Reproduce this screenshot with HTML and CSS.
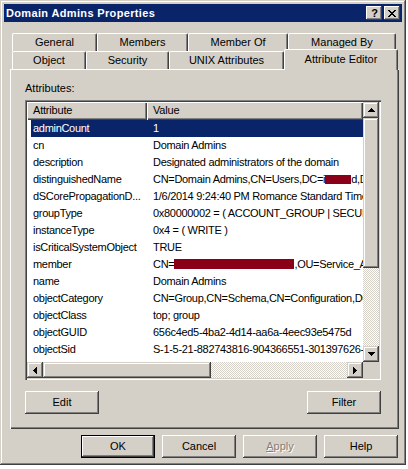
FILE: index.html
```html
<!DOCTYPE html>
<html>
<head>
<meta charset="utf-8">
<title>Domain Admins Properties</title>
<link rel="stylesheet" href="styles.css">
</head>
<body>
<div class="window">
  <div class="titlebar">
    <span class="title">Domain Admins Properties</span>
    <div class="caption-buttons">
      <div class="cap-btn help">?</div>
      <div class="cap-btn close">
        <svg width="8" height="7" viewBox="0 0 8 7"><path fill="#000" d="M0 0h2v1h-2zM6 0h2v1h-2zM1 1h2v1h-2zM5 1h2v1h-2zM2 2h4v1h-4zM3 3h2v1h-2zM2 4h4v1h-4zM1 5h2v1h-2zM5 5h2v1h-2zM0 6h2v1h-2zM6 6h2v1h-2z"/></svg>
      </div>
    </div>
  </div>
  <div class="client">
    <div class="tabs">
      <div class="tab-row">
        <div class="tab t-general">General</div>
        <div class="tab t-members">Members</div>
        <div class="tab t-memberof">Member Of</div>
        <div class="tab t-managed">Managed By</div>
      </div>
      <div class="tab-row">
        <div class="tab t-object">Object</div>
        <div class="tab t-security">Security</div>
        <div class="tab t-unix">UNIX Attributes</div>
        <div class="tab tab-selected t-attr">Attribute Editor</div>
      </div>
    </div>
    <div class="panel">
      <div class="label">Attributes:</div>
      <div class="listbox">
        <div class="list-area">
          <div class="header">
            <div class="hcell hc-attr">Attribute</div>
            <div class="hcell hc-val">Value</div>
          </div>
          <div class="rows">
            <div class="row selected"><div class="c-attr">adminCount</div><div class="c-val">1</div></div>
            <div class="row"><div class="c-attr">cn</div><div class="c-val">Domain Admins</div></div>
            <div class="row"><div class="c-attr">description</div><div class="c-val">Designated administrators of the domain</div></div>
            <div class="row"><div class="c-attr">distinguishedName</div><div class="c-val">CN=Domain Admins,CN=Users,DC=i<span class="redact r-dn"></span>d,DC=local</div></div>
            <div class="row"><div class="c-attr">dSCorePropagationD...</div><div class="c-val">1/6/2014 9:24:40 PM Romance Standard Time</div></div>
            <div class="row"><div class="c-attr">groupType</div><div class="c-val">0x80000002 = ( ACCOUNT_GROUP | SECURITY_ENABLED )</div></div>
            <div class="row"><div class="c-attr">instanceType</div><div class="c-val">0x4 = ( WRITE )</div></div>
            <div class="row"><div class="c-attr">isCriticalSystemObject</div><div class="c-val">TRUE</div></div>
            <div class="row"><div class="c-attr">member</div><div class="c-val">CN=<span class="redact r-member"></span>,OU=Service_Accounts</div></div>
            <div class="row"><div class="c-attr">name</div><div class="c-val">Domain Admins</div></div>
            <div class="row"><div class="c-attr">objectCategory</div><div class="c-val">CN=Group,CN=Schema,CN=Configuration,DC=local</div></div>
            <div class="row"><div class="c-attr">objectClass</div><div class="c-val">top; group</div></div>
            <div class="row"><div class="c-attr">objectGUID</div><div class="c-val">656c4ed5-4ba2-4d14-aa6a-4eec93e5475d</div></div>
            <div class="row"><div class="c-attr">objectSid</div><div class="c-val">S-1-5-21-882743816-904366551-301397626-512</div></div>
            <div class="row"><div class="c-attr">sAMAccountName</div><div class="c-val">Domain Admins</div></div>
          </div>
        </div>
        <div class="vscroll">
          <div class="sb-btn"><svg width="7" height="4" viewBox="0 0 7 4"><path fill="#000" d="M3 0h1v1h-1zM2 1h3v1h-3zM1 2h5v1h-5zM0 3h7v1h-7z"/></svg></div>
          <div class="sb-thumb v-thumb"></div>
          <div class="sb-track"></div>
          <div class="sb-btn"><svg width="7" height="4" viewBox="0 0 7 4"><path fill="#000" d="M0 0h7v1h-7zM1 1h5v1h-5zM2 2h3v1h-3zM3 3h1v1h-1z"/></svg></div>
        </div>
        <div class="hscroll">
          <div class="sb-btn"><svg width="4" height="7" viewBox="0 0 4 7"><path fill="#000" d="M0 3h1v1h-1zM1 2h1v3h-1zM2 1h1v5h-1zM3 0h1v7h-1z"/></svg></div>
          <div class="sb-thumb h-thumb"></div>
          <div class="sb-track"></div>
          <div class="sb-btn"><svg width="4" height="7" viewBox="0 0 4 7"><path fill="#000" d="M0 0h1v7h-1zM1 1h1v5h-1zM2 2h1v3h-1zM3 3h1v1h-1z"/></svg></div>
        </div>
        <div class="corner"></div>
      </div>
      <div class="panel-buttons">
        <div class="btn">Edit</div>
        <div class="btn">Filter</div>
      </div>
    </div>
    <div class="dialog-buttons">
      <div class="btn btn-default">OK</div>
      <div class="btn">Cancel</div>
      <div class="btn btn-disabled"><span class="mn">A</span>pply</div>
      <div class="btn">Help</div>
    </div>
  </div>
</div>
</body>
</html>
```

FILE: styles.css
```css
* { box-sizing: border-box; }
html, body { margin: 0; padding: 0; }
body {
  background: #ffffff;
  width: 408px;
  height: 469px;
  overflow: hidden;
  font-family: "Liberation Sans", Arial, sans-serif;
  font-size: 11px;
  color: #000;
}

.window {
  width: 406px;
  height: 465px;
  padding: 4px;
  background: #d4d0c8;
  box-shadow: inset -1px -1px #404040, inset 1px 1px #d4d0c8, inset -2px -2px #808080, inset 2px 2px #ffffff;
}

.titlebar {
  height: 18px;
  background: #0a246a;
  display: flex;
  align-items: center;
  justify-content: space-between;
  padding: 0 2px 0 2px;
}
.title {
  color: #fff;
  font-weight: bold;
  font-size: 11px;
  letter-spacing: 0.35px;
}
.caption-buttons { display: flex; gap: 2px; }
.cap-btn {
  width: 16px;
  height: 14px;
  background: #d4d0c8;
  box-shadow: inset -1px -1px #404040, inset 1px 1px #ffffff, inset -2px -2px #808080;
  display: flex;
  align-items: center;
  justify-content: center;
}
.help { font-weight: bold; font-size: 11px; line-height: 14px; padding-left: 1px; }

.client { padding-left: 6px; }

.tabs { padding-top: 11px; padding-left: 2px; }
.tab-row { display: flex; height: 18px; }
.tab {
  height: 18px;
  line-height: 17px;
  text-align: center;
  border-top: 1px solid #fff;
  border-left: 1px solid #fff;
  border-right: 1px solid #404040;
  border-radius: 2px 2px 0 0;
  box-shadow: inset -1px 0 #808080;
  background: #d4d0c8;
  white-space: nowrap;
}
.t-general { width: 85px; }
.t-members { width: 91px; }
.t-memberof { width: 100px; }
.t-managed { width: 108px; }
.t-object { width: 74px; }
.t-security { width: 83px; }
.t-unix { width: 115px; }
.tab-selected {
  position: relative;
  z-index: 1;
  width: 114px;
  height: 21px;
  margin-top: -2px;
  line-height: 18px;
}
.t-attr { }

.panel {
  width: 389px;
  height: 360px;
  padding: 13px 0 0 15px;
  box-shadow: inset 1px 1px #ffffff, inset -1px -1px #404040, inset -2px -2px #808080;
}
.label { height: 13px; line-height: 13px; }

.listbox {
  margin-top: 5px;
  width: 356px;
  height: 280px;
  padding: 2px;
  background: #fff;
  box-shadow: inset 1px 1px #808080, inset 2px 2px #404040, inset -1px -1px #ffffff, inset -2px -2px #d4d0c8;
  display: grid;
  grid-template-columns: 336px 16px;
  grid-template-rows: 260px 16px;
}
.list-area { overflow: hidden; background: #fff; }
.header { display: flex; height: 18px; }
.hcell {
  height: 18px;
  line-height: 17px;
  padding-left: 6px;
  background: #d4d0c8;
  box-shadow: inset 1px 1px #ffffff, inset -1px -1px #404040, inset -2px -2px #808080;
  white-space: nowrap;
  letter-spacing: -0.2px;
}
.hc-attr { width: 120px; }
.hc-val { width: 216px; }

.rows { padding-left: 4px; }
.row {
  display: flex;
  height: 17px;
  line-height: 17px;
  white-space: nowrap;
  letter-spacing: -0.3px;
}
.c-attr { width: 116px; padding-left: 2px; flex: none; overflow: hidden; }
.c-val { padding-left: 6px; flex: none; }
.row.selected { background: #0a246a; color: #fff; }

.redact {
  display: inline-block;
  background: #8a0018;
  height: 9px;
  vertical-align: -1px;
}
.r-dn { width: 26px; }
.r-member { width: 120px; height: 10px; }

.vscroll, .hscroll { display: flex; background: #d4d0c8; }
.vscroll { flex-direction: column; }
.sb-btn {
  width: 16px;
  height: 16px;
  flex: none;
  background: #d4d0c8;
  box-shadow: inset -1px -1px #404040, inset 1px 1px #d4d0c8, inset -2px -2px #808080, inset 2px 2px #ffffff;
  display: flex;
  align-items: center;
  justify-content: center;
}
.sb-thumb {
  flex: none;
  background: #d4d0c8;
  box-shadow: inset -1px -1px #404040, inset 1px 1px #d4d0c8, inset -2px -2px #808080, inset 2px 2px #ffffff;
}
.v-thumb { width: 16px; height: 150px; }
.h-thumb { height: 16px; width: 168px; }
.sb-track {
  flex: 1;
  background: repeating-conic-gradient(#d4d0c8 0 25%, #ffffff 0 50%) 0 0 / 2px 2px;
}
.corner { background: #d4d0c8; }

.panel-buttons {
  margin-top: 11px;
  width: 356px;
  display: flex;
  justify-content: space-between;
}
.btn {
  width: 74px;
  height: 23px;
  line-height: 22px;
  text-align: center;
  background: #d4d0c8;
  box-shadow: inset -1px -1px #404040, inset 1px 1px #ffffff, inset -2px -2px #808080;
}
.btn-default {
  border: 1px solid #000;
  line-height: 20px;
}
.btn-disabled { color: #808080; text-shadow: 1px 1px #ffffff; }
.mn { text-decoration: underline; }

.dialog-buttons {
  margin-top: 6px;
  width: 389px;
  padding-right: 1px;
  display: flex;
  justify-content: flex-end;
  gap: 7px;
}
```
